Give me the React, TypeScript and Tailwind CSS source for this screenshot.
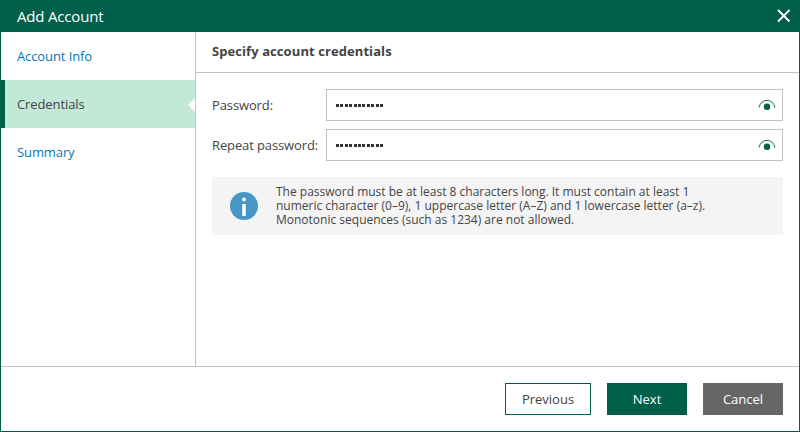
const font = { fontFamily: "'Open Sans', 'DejaVu Sans', sans-serif" }

function Eye() {
  return (
    <svg width="18" height="14" viewBox="0 0 18 14" fill="none">
      <path d="M1 9.5 C3 0 15 0 17 9.5" stroke="#00604c" strokeWidth="1" />
      <circle cx="9" cy="8.7" r="3.2" fill="#00604c" />
    </svg>
  )
}

function PasswordRow({ label }: { label: string }) {
  return (
    <div className="flex items-center">
      <span className="w-[114px] pt-[2px] text-[13px] tracking-[-0.12px] text-[#444444]">{label}</span>
      <div className="flex h-8 flex-1 items-center justify-between border border-[#c2c2c2] pl-[9px] pr-[6px]">
        <span className="flex gap-[1.4px]">
          {Array.from({ length: 11 }).map((_, i) => (
            <span key={i} className="h-[3px] w-[3px] bg-[#333333]" />
          ))}
        </span>
        <Eye />
      </div>
    </div>
  )
}

export default function App() {
  return (
    <div style={font} className="flex h-[432px] w-[800px] flex-col border-x border-b border-[#00604c] bg-white">
      <div className="-mx-px flex h-8 shrink-0 items-center justify-between bg-[#00604c] pl-[17px] pr-[9px] text-[15px] tracking-[-0.18px] text-white">
        <span>Add Account</span>
        <svg width="14" height="14" viewBox="0 0 14 14" stroke="white" strokeWidth="1.8">
          <path d="M1 1 L12.5 12.5 M12.5 1 L1 12.5" />
        </svg>
      </div>

      <div className="flex flex-1">
        <div className="w-[195px] shrink-0 border-r border-[#c2c2c2] text-[13px] tracking-[-0.1px]">
          <div className="flex h-12 items-center pl-4 pt-[2px] text-[#0078b4]">Account Info</div>
          <div className="relative flex h-12 items-center border-l-4 border-[#00604c] bg-[#c2e8d7] pl-3 pt-[2px] text-[#444444]">
            Credentials
            <span className="absolute right-0 top-[18px] h-0 w-0 border-y-[7px] border-r-[7px] border-y-transparent border-r-white" />
          </div>
          <div className="flex h-12 items-center pl-4 pt-[2px] text-[#0078b4]">Summary</div>
        </div>

        <div className="flex-1">
          <div className="flex h-[41px] items-center border-b border-[#c2c2c2] pl-4 text-[13px] font-bold tracking-[0.08px] text-[#444444]">
            Specify account credentials
          </div>
          <div className="flex flex-col gap-2 pl-4 pr-4 pt-4">
            <PasswordRow label="Password:" />
            <PasswordRow label="Repeat password:" />
            <div className="mt-2 flex h-[58px] items-center bg-[#f4f4f4] pl-[18px]">
              <svg width="28" height="28" viewBox="0 0 28 28" className="shrink-0">
                <circle cx="14" cy="14" r="14" fill="#4896c8" />
                <circle cx="14" cy="7.5" r="2" fill="white" />
                <rect x="12.25" y="12" width="3.5" height="12" fill="white" />
              </svg>
              <p className="ml-[18px] text-[12px] leading-[14px] text-[#444444]">
                The password must be at least 8 characters long. It must contain at least 1
                <br />
                numeric character (0–9), 1 uppercase letter (A–Z) and 1 lowercase letter (a–z).
                <br />
                Monotonic sequences (such as 1234) are not allowed.
              </p>
            </div>
          </div>
        </div>
      </div>

      <div className="flex h-[65px] shrink-0 items-center justify-end gap-4 border-t border-[#c2c2c2] pb-[1px] pr-4 text-[13px]">
        <button className="h-8 w-[86px] border border-[#00604c] pt-[2px] text-[#444444]">Previous</button>
        <button className="h-8 w-20 bg-[#00604c] pt-[2px] text-white">Next</button>
        <button className="h-8 w-20 bg-[#666666] pt-[2px] text-white">Cancel</button>
      </div>
    </div>
  )
}
